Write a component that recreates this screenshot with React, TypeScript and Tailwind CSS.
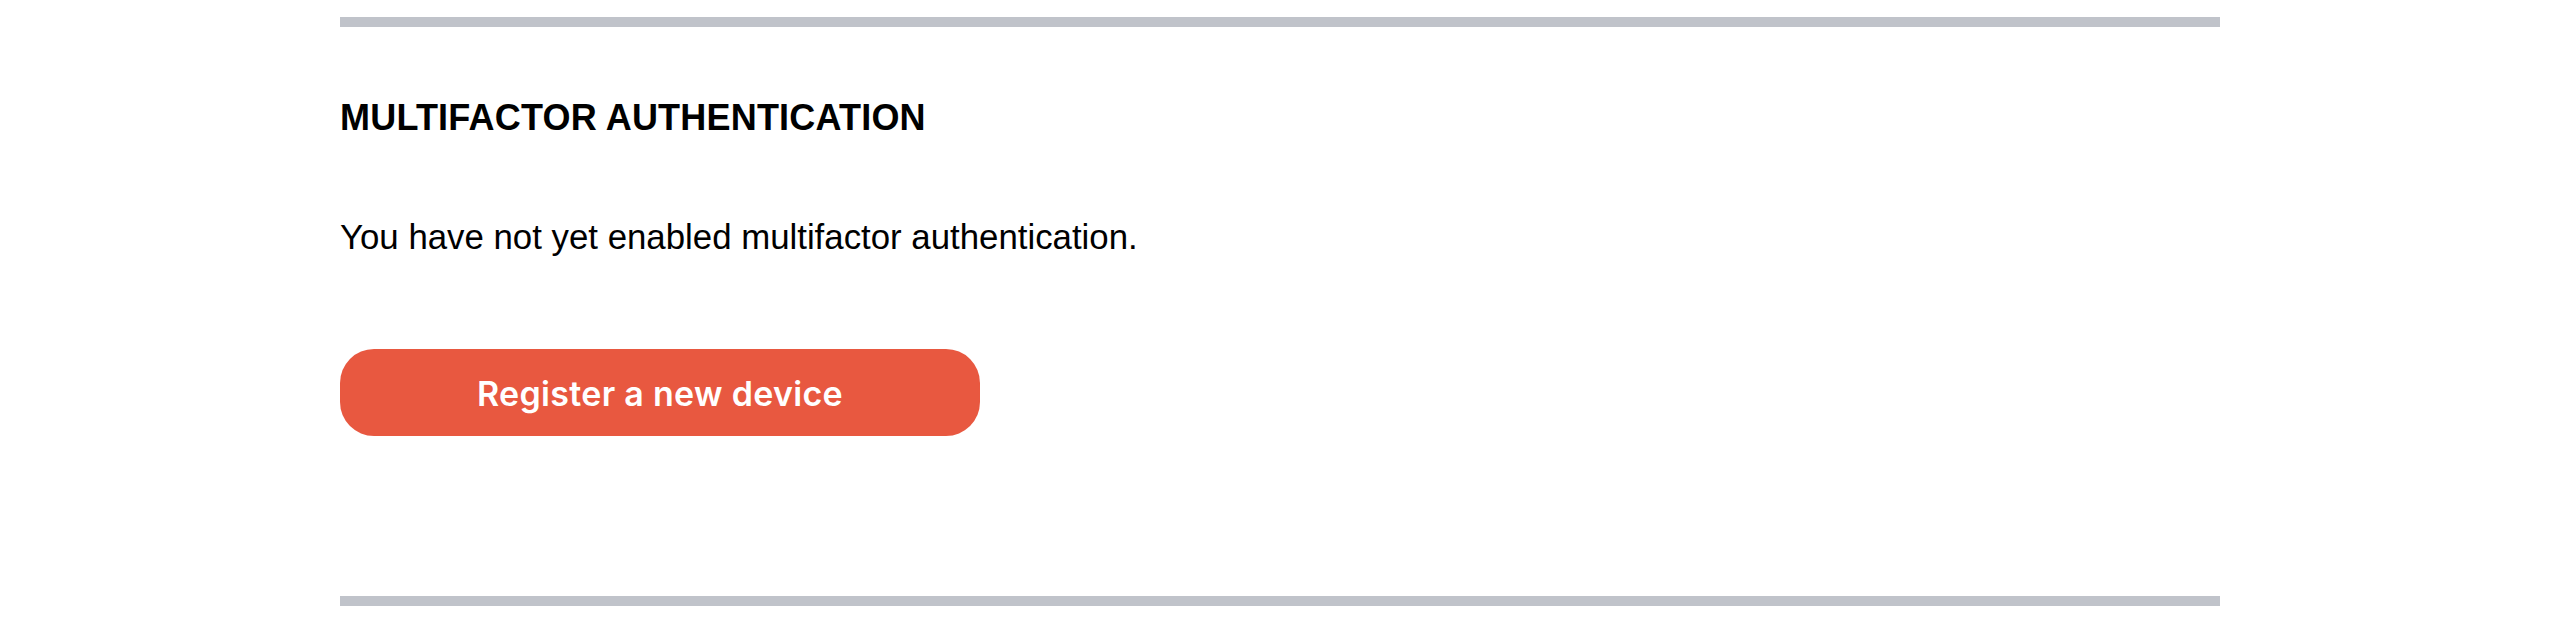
export default function App() {
  return (
    <div className="min-h-[633px] w-full bg-white">
      <div className="ml-[340px] w-[1880px] pt-[17px] flex flex-col">
        <div className="h-[10px] w-full bg-[#c0c3ca]" />
        <h2 className="mt-[73px] text-[36px] leading-[36px] font-bold text-black tracking-[0.2px] font-['Liberation_Sans',Arial,sans-serif]">
          MULTIFACTOR AUTHENTICATION
        </h2>
        <p className="mt-[83px] text-[34.8px] leading-[35px] text-black font-['Liberation_Sans',Arial,sans-serif]">
          You have not yet enabled multifactor authentication.
        </p>
        <button
          type="button"
          className="mt-[95px] h-[87px] w-[640px] rounded-[34px] bg-[#e85840] text-white text-[34px] leading-[34px] pt-[2px] font-semibold tracking-[0.3px] flex items-center justify-center font-['Inter','Roboto',sans-serif]"
        >
          Register a new device
        </button>
        <div className="mt-[160px] h-[10px] w-full bg-[#c0c3ca]" />
      </div>
    </div>
  );
}
